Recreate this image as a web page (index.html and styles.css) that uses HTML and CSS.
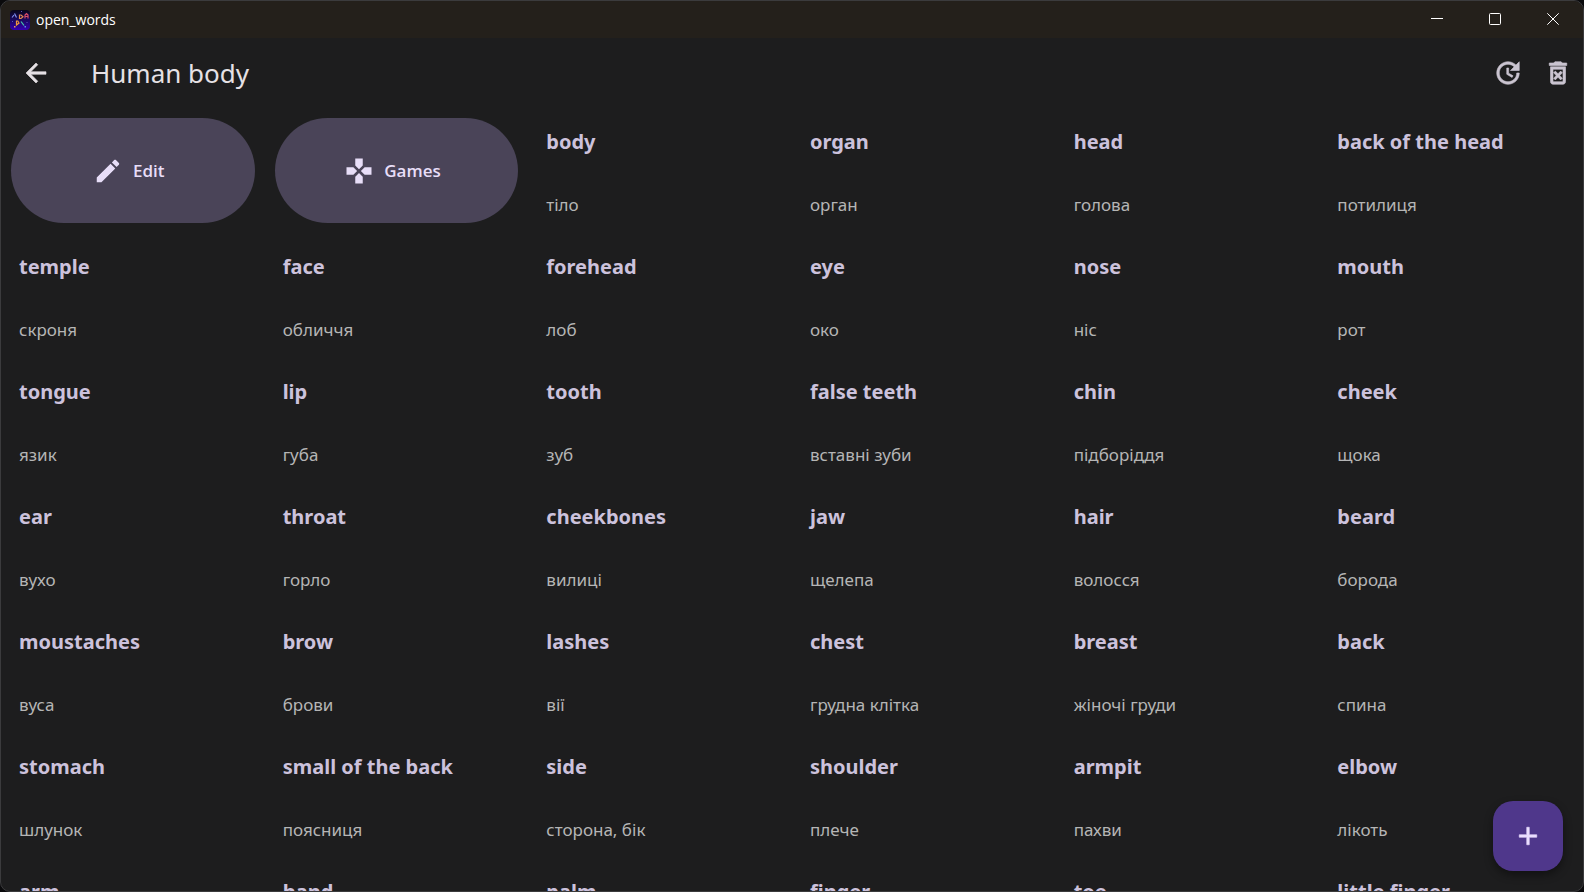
FILE: index.html
```html
<!DOCTYPE html>
<html lang="en">
<head>
<meta charset="utf-8">
<title>open_words</title>
<link rel="stylesheet" href="styles.css">
</head>
<body>
<div class="window">
  <div class="titlebar">
    <svg class="logo" viewBox="0 0 20 20" aria-hidden="true">
      <defs>
        <linearGradient id="night" x1="0" y1="0" x2="0" y2="1">
          <stop offset="0" stop-color="#070618"/>
          <stop offset="0.5" stop-color="#1a0860"/>
          <stop offset="1" stop-color="#3600b0"/>
        </linearGradient>
      </defs>
      <rect width="20" height="20" rx="4" fill="url(#night)"/>
      <g fill="none" stroke-width="1.2">
        <path d="M2 7.500 4 5M4.500 3.500 6.500 7.500" stroke="#7f8df0"/>
        <path d="M9.500 5v3.500h1.500l2-1.700-2-1.800z" stroke="#e08a50"/>
        <path d="M15 8.500V5l1.500-1.500L18 5v3.500M15 6.500h3" stroke="#d84c68"/>
        <path d="M6.500 11v4l2.500-2-1.200-2z" stroke="#f0983c"/>
        <path d="M11 11.500 14 15.500" stroke="#45c9a8"/>
      </g>
      <path d="M4 16h1.500v1.500H4z" fill="#e89a60"/>
      <path d="M14.500 16h1.500v1.500h-1.500z" fill="#5b8cf0"/>
      <path d="M11 1h1v1h-1zM2 11h1v1H2zM16.500 12h1v1h-1z" fill="#5a58b8"/>
    </svg>
    <span class="app-name">open_words</span>
    <div class="caption-buttons">
      <button class="caption" type="button" aria-label="Minimize"><svg viewBox="0 0 12 12"><path d="M0 5.500h12"/></svg></button>
      <button class="caption" type="button" aria-label="Maximize"><svg viewBox="0 0 12 12"><rect x=".5" y=".5" width="11" height="11" rx="1"/></svg></button>
      <button class="caption" type="button" aria-label="Close"><svg viewBox="0 0 12 12"><path d="M.3.3l11.400 11.400M11.700.3.3 11.700"/></svg></button>
    </div>
  </div>
  <header class="appbar">
    <button class="icon-button back" type="button" aria-label="Back"><svg class="icon" viewBox="0 0 24 24"><path d="M20 11H7.830l5.590-5.590L12 4l-8 8 8 8 1.410-1.410L7.830 13H20v-2z"/></svg></button>
    <h1 class="page-title">Human body</h1>
    <button class="icon-button" type="button" aria-label="Update"><svg class="icon" viewBox="0 0 24 24"><path d="M11 8v5l4.250 2.520.77-1.280-3.520-2.090V8H11zm10 2V3l-2.640 2.640C16.740 4.010 14.490 3 12 3c-4.970 0-9 4.030-9 9s4.030 9 9 9 9-4.030 9-9h-2c0 3.860-3.140 7-7 7s-7-3.140-7-7 3.140-7 7-7c1.930 0 3.680.79 4.950 2.050L14 10h7z"/></svg></button>
    <button class="icon-button" type="button" aria-label="Delete"><svg class="icon" viewBox="0 0 24 24"><path d="M14.120 10.470L12 12.590l-2.130-2.120-1.410 1.410L10.590 14l-2.120 2.120 1.410 1.410L12 15.410l2.120 2.120 1.410-1.410L13.410 14l2.120-2.120zM15.500 4l-1-1h-5l-1 1H5v2h14V4zM6 19c0 1.100.9 2 2 2h8c1.100 0 2-.9 2-2V7H6v12zM8 9h8v10H8V9z"/></svg></button>
  </header>
  <main class="grid">
    <button class="action" type="button"><svg class="icon" viewBox="0 0 24 24"><path d="M3 17.250V21h3.750L17.810 9.940l-3.750-3.750L3 17.250zM20.710 7.040c.39-.39.39-1.020 0-1.410l-2.340-2.340c-.39-.39-1.020-.39-1.410 0l-1.830 1.830 3.750 3.750 1.830-1.830z"/></svg>Edit</button>
    <button class="action" type="button"><svg class="icon" viewBox="0 0 24 24"><path d="M15 7.500V2H9v5.500l3 3 3-3zM7.500 9H2v6h5.500l3-3-3-3zM9 16.500V22h6v-5.500l-3-3-3 3zM16.500 9l-3 3 3 3H22V9h-5.500z"/></svg>Games</button>
    <article class="word"><h2>body</h2><p lang="uk">тіло</p></article>
    <article class="word"><h2>organ</h2><p lang="uk">орган</p></article>
    <article class="word"><h2>head</h2><p lang="uk">голова</p></article>
    <article class="word"><h2>back of the head</h2><p lang="uk">потилиця</p></article>

    <article class="word"><h2>temple</h2><p lang="uk">скроня</p></article>
    <article class="word"><h2>face</h2><p lang="uk">обличчя</p></article>
    <article class="word"><h2>forehead</h2><p lang="uk">лоб</p></article>
    <article class="word"><h2>eye</h2><p lang="uk">око</p></article>
    <article class="word"><h2>nose</h2><p lang="uk">ніс</p></article>
    <article class="word"><h2>mouth</h2><p lang="uk">рот</p></article>

    <article class="word"><h2>tongue</h2><p lang="uk">язик</p></article>
    <article class="word"><h2>lip</h2><p lang="uk">губа</p></article>
    <article class="word"><h2>tooth</h2><p lang="uk">зуб</p></article>
    <article class="word"><h2>false teeth</h2><p lang="uk">вставні зуби</p></article>
    <article class="word"><h2>chin</h2><p lang="uk">підборіддя</p></article>
    <article class="word"><h2>cheek</h2><p lang="uk">щока</p></article>

    <article class="word"><h2>ear</h2><p lang="uk">вухо</p></article>
    <article class="word"><h2>throat</h2><p lang="uk">горло</p></article>
    <article class="word"><h2>cheekbones</h2><p lang="uk">вилиці</p></article>
    <article class="word"><h2>jaw</h2><p lang="uk">щелепа</p></article>
    <article class="word"><h2>hair</h2><p lang="uk">волосся</p></article>
    <article class="word"><h2>beard</h2><p lang="uk">борода</p></article>

    <article class="word"><h2>moustaches</h2><p lang="uk">вуса</p></article>
    <article class="word"><h2>brow</h2><p lang="uk">брови</p></article>
    <article class="word"><h2>lashes</h2><p lang="uk">вії</p></article>
    <article class="word"><h2>chest</h2><p lang="uk">грудна клітка</p></article>
    <article class="word"><h2>breast</h2><p lang="uk">жіночі груди</p></article>
    <article class="word"><h2>back</h2><p lang="uk">спина</p></article>

    <article class="word"><h2>stomach</h2><p lang="uk">шлунок</p></article>
    <article class="word"><h2>small of the back</h2><p lang="uk">поясниця</p></article>
    <article class="word"><h2>side</h2><p lang="uk">сторона, бік</p></article>
    <article class="word"><h2>shoulder</h2><p lang="uk">плече</p></article>
    <article class="word"><h2>armpit</h2><p lang="uk">пахви</p></article>
    <article class="word"><h2>elbow</h2><p lang="uk">лікоть</p></article>

    <article class="word"><h2>arm</h2></article>
    <article class="word"><h2>hand</h2></article>
    <article class="word"><h2>palm</h2></article>
    <article class="word"><h2>finger</h2></article>
    <article class="word"><h2>toe</h2></article>
    <article class="word"><h2>little finger</h2></article>
  </main>
  <button class="fab" type="button" aria-label="Add word"><svg class="icon" viewBox="0 0 24 24"><path d="M19 13h-6v6h-2v-6H5v-2h6V5h2v6h6v2z"/></svg></button>
</div>
</body>
</html>
```
FILE: styles.css
```css
* {
  box-sizing: border-box;
}

body {
  margin: 0;
  background: #0a0a0c;
  color: #e6e1e5;
  font-family: "Noto Sans", "Open Sans", sans-serif;
}

button {
  margin: 0;
  padding: 0;
  border: 0;
  background: none;
  color: inherit;
  font: inherit;
}

h1, h2, p {
  margin: 0;
}

.window {
  position: relative;
  display: flex;
  flex-direction: column;
  height: 100vh;
  overflow: hidden;
  border: 1px solid #3b3b3d;
  border-radius: 10px;
  background: #1d1d1e;
}

.titlebar {
  display: flex;
  flex: none;
  align-items: center;
  height: 37px;
  padding: 0 1px 0 9px;
  background: #24201b;
  color: #fff;
}

.logo {
  width: 20px;
  height: 20px;
}

.app-name {
  flex: 1;
  padding-left: 6px;
  font-family: "Open Sans", sans-serif;
  font-size: 14px;
  line-height: 18px;
}

.caption-buttons {
  display: flex;
  height: 36px;
  align-self: flex-start;
}

.caption {
  display: grid;
  place-items: center;
  width: 58px;
}

.caption svg {
  width: 12px;
  height: 12px;
  fill: none;
  stroke: #fff;
  stroke-width: 1;
}

.appbar {
  display: flex;
  flex: none;
  align-items: center;
  height: 70px;
}

.icon {
  flex: none;
  width: 30px;
  height: 30px;
  fill: currentColor;
  stroke: currentColor;
  stroke-width: 0.5;
  stroke-linejoin: round;
}

.icon-button {
  display: grid;
  place-items: center;
  width: 50px;
  height: 50px;
  color: #cac4d0;
}

.back {
  width: 70px;
  color: #e6e1e5;
}

.page-title {
  flex: 1;
  padding-left: 20px;
  font-size: 26px;
  font-weight: 400;
}

.grid {
  display: grid;
  flex: 1;
  grid-template-columns: repeat(6, 1fr);
  grid-auto-rows: 125px;
  min-height: 0;
  overflow: hidden;
}

.action {
  display: flex;
  align-items: center;
  justify-content: center;
  gap: 10px;
  margin: 10px;
  padding-right: 8px;
  border-radius: 53px;
  background: #4a4458;
  color: #e8def8;
  font-family: "Open Sans", sans-serif;
  font-size: 17px;
  font-weight: 600;
}

.action .icon {
  stroke-width: 0;
}

.word {
  display: flex;
  flex-direction: column;
  gap: 37px;
  padding: 20px 18px 0;
}

.word h2 {
  color: #ccc2dc;
  font-size: 20px;
  font-weight: 700;
  line-height: 28px;
  white-space: nowrap;
}

.word p {
  color: #b5b5b5;
  font-size: 17px;
  line-height: 24px;
  white-space: nowrap;
}

.fab {
  position: absolute;
  right: 20px;
  bottom: 20px;
  display: grid;
  place-items: center;
  width: 70px;
  height: 70px;
  border-radius: 20px;
  background: #4f378b;
  color: #eaddff;
  box-shadow: 0 4px 8px rgba(0, 0, 0, 0.4);
}
```
